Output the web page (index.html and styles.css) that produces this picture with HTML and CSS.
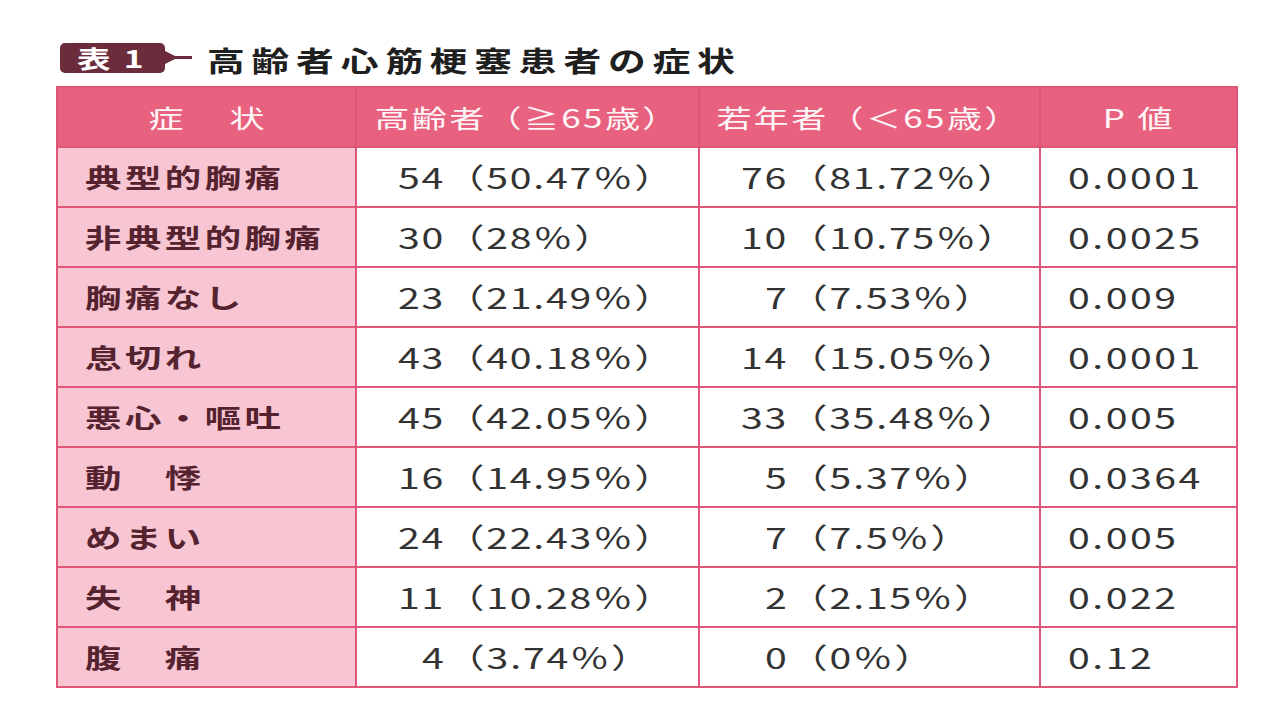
FILE: index.html
```html
<!DOCTYPE html>
<html lang="ja">
<head>
<meta charset="utf-8">
<title>表1 高齢者心筋梗塞患者の症状</title>
<link rel="stylesheet" href="styles.css">
</head>
<body>
<div class="page">
  <div class="title-row">
    <span class="badge"><span class="sx badge-text">表 1</span></span>
    <svg class="pointer" width="27" height="29" viewBox="0 0 27 29" aria-hidden="true">
      <polygon points="0,8 0,21 13,14.5" fill="#6b2d3b"/>
      <rect x="9" y="13" width="18" height="3" fill="#6b2d3b"/>
    </svg>
    <h1 class="title"><span class="sx title-text">高齢者心筋梗塞患者の症状</span></h1>
  </div>

  <table class="symptoms">
    <colgroup>
      <col class="c1"><col class="c2"><col class="c3"><col class="c4">
    </colgroup>
    <thead>
      <tr>
        <th><span class="sxc head-wide">症　状</span></th>
        <th><span class="sxc">高齢者（≧65歳）</span></th>
        <th><span class="sxc">若年者（＜65歳）</span></th>
        <th><span class="sxc">P 値</span></th>
      </tr>
    </thead>
    <tbody>
      <tr><td class="label"><span class="sx">典型的胸痛</span></td><td class="num"><span class="sx">54（50.47％）</span></td><td class="num"><span class="sx">76（81.72％）</span></td><td class="p"><span class="sx">0.0001</span></td></tr>
      <tr><td class="label"><span class="sx">非典型的胸痛</span></td><td class="num"><span class="sx">30（28％）</span></td><td class="num"><span class="sx">10（10.75％）</span></td><td class="p"><span class="sx">0.0025</span></td></tr>
      <tr><td class="label"><span class="sx">胸痛なし</span></td><td class="num"><span class="sx">23（21.49％）</span></td><td class="num single"><span class="sx">7（7.53％）</span></td><td class="p"><span class="sx">0.009</span></td></tr>
      <tr><td class="label"><span class="sx">息切れ</span></td><td class="num"><span class="sx">43（40.18％）</span></td><td class="num"><span class="sx">14（15.05％）</span></td><td class="p"><span class="sx">0.0001</span></td></tr>
      <tr><td class="label"><span class="sx">悪心・嘔吐</span></td><td class="num"><span class="sx">45（42.05％）</span></td><td class="num"><span class="sx">33（35.48％）</span></td><td class="p"><span class="sx">0.005</span></td></tr>
      <tr><td class="label"><span class="sx">動　悸</span></td><td class="num"><span class="sx">16（14.95％）</span></td><td class="num single"><span class="sx">5（5.37％）</span></td><td class="p"><span class="sx">0.0364</span></td></tr>
      <tr><td class="label"><span class="sx">めまい</span></td><td class="num"><span class="sx">24（22.43％）</span></td><td class="num single"><span class="sx">7（7.5％）</span></td><td class="p"><span class="sx">0.005</span></td></tr>
      <tr><td class="label"><span class="sx">失　神</span></td><td class="num"><span class="sx">11（10.28％）</span></td><td class="num single"><span class="sx">2（2.15％）</span></td><td class="p"><span class="sx">0.022</span></td></tr>
      <tr><td class="label"><span class="sx">腹　痛</span></td><td class="num single"><span class="sx">4（3.74％）</span></td><td class="num single"><span class="sx">0（0％）</span></td><td class="p"><span class="sx">0.12</span></td></tr>
    </tbody>
  </table>
</div>
</body>
</html>
```

FILE: styles.css
```css
* { box-sizing: border-box; }

html, body {
  margin: 0;
  padding: 0;
  background: #ffffff;
}

body {
  font-family: "Noto Sans CJK JP", "Noto Sans", sans-serif;
  color: #2e2e2e;
}

.page {
  width: 1280px;
  height: 720px;
  padding: 43px 0 0 56px;
  overflow: hidden;
}

/* horizontally widened glyphs, as in the printed table */
.sx {
  display: inline-block;
  transform: scaleX(1.4);
  transform-origin: left center;
  white-space: nowrap;
}

.sxc {
  display: inline-block;
  transform: scaleX(1.4);
  transform-origin: center center;
  white-space: nowrap;
}

/* ---------- title ---------- */
.title-row {
  display: flex;
  align-items: center;
  height: 29px;
  padding-left: 4px;
}

.badge {
  display: flex;
  align-items: center;
  width: 105px;
  height: 30px;
  padding-left: 17px;
  background: #6b2d3b;
  border-radius: 5px;
}

.badge-text {
  color: #ffffff;
  font-size: 24px;
  font-weight: 700;
  line-height: 1;
  letter-spacing: 2px;
}

.pointer {
  display: block;
  flex: none;
}

.title {
  margin: 0 0 0 15px;
  font-size: 28px;
  font-weight: 700;
  line-height: 1;
  color: #1f1f1f;
  padding-top: 4px;
}

.title-text {
  transform: scaleX(1.35);
  letter-spacing: 5px;
}

/* ---------- table ---------- */
.symptoms {
  margin-top: 14px;
  border-collapse: collapse;
  table-layout: fixed;
  width: 1180px;
  border: 2px solid #e15677;
}

.c1 { width: 299px; }
.c2 { width: 343px; }
.c3 { width: 341px; }
.c4 { width: 197px; }

.symptoms tr {
  height: 60px;
}

.symptoms th,
.symptoms td {
  border: 2px solid #e15677;
  padding: 0;
  line-height: 1;
  vertical-align: middle;
  white-space: nowrap;
  overflow: visible;
}

.symptoms th {
  background: #e8627f;
  color: #fff6f8;
  font-size: 25px;
  font-weight: 400;
  text-align: center;
  letter-spacing: 1.7px;
}

.head-wide {
  letter-spacing: 4px;
  padding-left: 4px;
}

.symptoms td {
  font-size: 28px;
  background: #ffffff;
}

.symptoms td.label {
  font-size: 26px;
  background: #f7c6d2;
  color: #55232f;
  font-weight: 700;
  padding-left: 27px;
  letter-spacing: 2.5px;
}

.symptoms td.num {
  padding-left: 41px;
  color: #333333;
  letter-spacing: 1.3px;
}

.symptoms td.num.single {
  padding-left: 65px;
}

.symptoms td.p {
  padding-left: 27px;
  color: #333333;
  letter-spacing: 1.8px;
}
```
